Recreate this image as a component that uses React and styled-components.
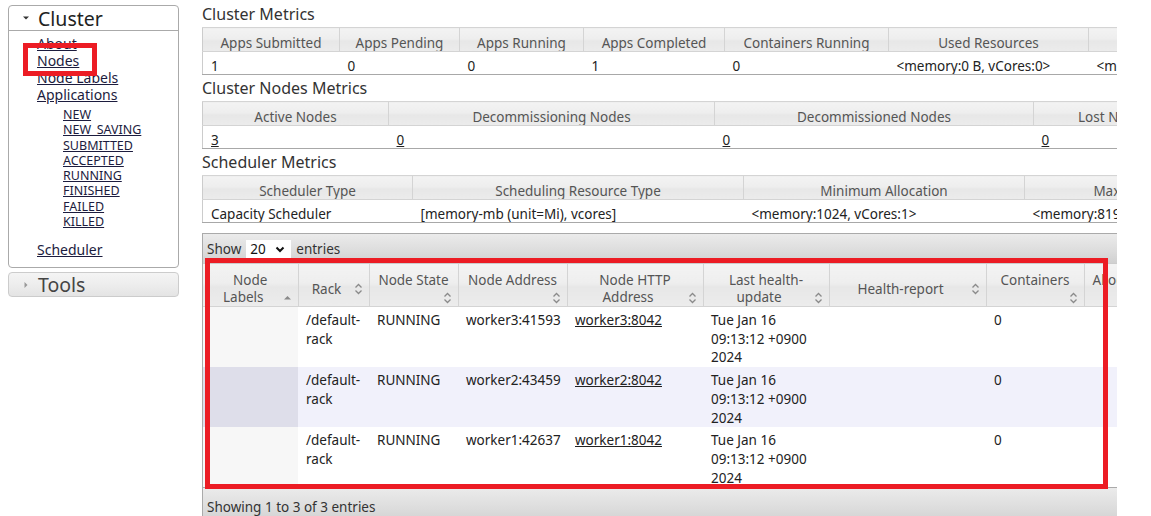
import React from 'react';
import styled, { createGlobalStyle } from 'styled-components';

const GlobalStyle = createGlobalStyle`
  html, body {
    margin: 0;
    padding: 0;
    background: #fff;
  }
  body {
    font-family: 'Noto Sans', 'Open Sans', sans-serif;
    color: #222;
  }
`;

const Page = styled.div`
  position: relative;
  width: 1151px;
  height: 516px;
  overflow: hidden;
  display: flex;
  gap: 23px;
  padding: 5px 0 0 8px;
  box-sizing: border-box;
`;

const Sidebar = styled.div`
  width: 171px;
  flex-shrink: 0;
  display: flex;
  flex-direction: column;
  gap: 4px;
`;

const MenuBox = styled.div`
  border: 1px solid #aaa;
  border-radius: 4px;
  background: #fff;
`;

const MenuHeader = styled.div`
  height: 24px;
  display: flex;
  align-items: center;
  gap: 8px;
  padding-left: 13px;
  border-bottom: 1px solid #aaa;
  font-size: 19.5px;
  color: #222;
`;

const ToolsHeader = styled(MenuHeader)`
  height: 23px;
  border: 1px solid #ccc;
  border-radius: 4px;
  background: linear-gradient(to bottom, #f4f4f4 0%, #ededed 50%, #e4e4e4 100%);
  color: #444;
`;

const NavList = styled.ul`
  list-style: none;
  margin: 0;
  padding: ${(p) => (p.$sub ? '4px 0 12px 26px' : '4px 0 9px 28px')};
`;

const NavItem = styled.li`
  line-height: ${(p) => (p.$sub ? '15.3px' : '17px')};
  font-size: ${(p) => (p.$sub ? '12.5px' : '14px')};
`;

const NavLink = styled.a`
  color: #1c1c3e;
  text-decoration: underline;
  cursor: pointer;
`;

const Main = styled.div`
  width: 915px;
  flex-shrink: 0;
  overflow: hidden;
  display: flex;
  flex-direction: column;
  margin-top: -5px;
  padding-top: 1px;
`;

const Heading = styled.h3`
  margin: 0;
  height: 28px;
  line-height: 26px;
  font-size: 16px;
  font-weight: normal;
  color: #333;
  white-space: nowrap;
`;

const MetricsTable = styled.table`
  border-collapse: collapse;
  table-layout: fixed;
  width: ${(p) => p.$width}px;
  font-size: 13.5px;
  line-height: 16px;
  border-left: 1px solid #ccc;
`;

const headerGradient = `linear-gradient(to bottom, #f3f3f3 0%, #eeeeee 45%, #e7e7e7 55%, #ececec 100%)`;

const MetricsHead = styled.th`
  height: 16px;
  padding: 7px 8px 0;
  font-weight: normal;
  color: #555;
  text-align: center;
  white-space: nowrap;
  overflow: hidden;
  background: ${headerGradient};
  border-top: 1px solid #d4d4d4;
  border-right: 1px solid #d4d4d4;
  border-bottom: 1px solid #d4d4d4;
`;

const MetricsCell = styled.td`
  height: 15px;
  padding: 6px 8px 0;
  white-space: nowrap;
  overflow: hidden;
  color: #222;
  border-bottom: 1px solid #a8a8a8;
`;

const Plain = styled.a`
  color: #222;
  text-decoration: underline;
`;

const DataWrap = styled.div`
  margin-top: 10px;
  width: ${(p) => p.$width}px;
  border-left: 1px solid #aaa;
`;

const Toolbar = styled.div`
  height: ${(p) => (p.$bottom ? '33px' : '28px')};
  display: flex;
  align-items: center;
  gap: 5px;
  padding: ${(p) => (p.$bottom ? '2px 0 0 4px' : '1px 0 0 4px')};
  font-size: 13.5px;
  color: #333;
  border-top: 1px solid #aaa;
  border-bottom: ${(p) => (p.$bottom ? 'none' : '1px solid #ccc')};
  background: linear-gradient(to bottom, #ebebeb 0%, #dcdcdc 60%, #d0d0d0 100%);
`;

const SelectBox = styled.div`
  position: relative;
  width: 45px;
  height: 19px;
  background: #fff;
`;

const Select = styled.select`
  appearance: none;
  width: 100%;
  height: 100%;
  border: none;
  background: transparent;
  padding: 0 0 0 4px;
  font-family: inherit;
  font-size: 13.5px;
  color: #111;
`;

const Chevron = styled.svg`
  position: absolute;
  right: 6px;
  top: 6px;
  pointer-events: none;
`;

const NodesTable = styled.table`
  border-collapse: collapse;
  table-layout: fixed;
  width: ${(p) => p.$width}px;
  font-size: 13.5px;
`;

const NodesHead = styled.th`
  height: 34px;
  padding: 8px 8px 0;
  font-weight: normal;
  color: #555;
  line-height: 17px;
  text-align: center;
  vertical-align: middle;
  background: ${headerGradient};
  border-right: 1px solid #d4d4d4;
  border-bottom: 1px solid #d4d4d4;
  white-space: nowrap;
  overflow: hidden;
`;

const HeadLine = styled.span`
  position: relative;
  display: block;
  min-height: 17px;
  padding-right: ${(p) => (p.$icon ? '14px' : '0')};
`;

const IconSlot = styled.span`
  position: absolute;
  right: -2px;
  top: 50%;
  transform: translateY(-50%);
  display: flex;
`;

const NodeRow = styled.tr`
  background: ${(p) => (p.$alt ? '#f1f1fb' : '#fff')};
`;

const NodeCell = styled.td`
  height: 56px;
  padding: 4px 8px 0;
  line-height: 18.7px;
  vertical-align: top;
  color: #222;
  background: ${(p) => (p.$sorted ? (p.$alt ? '#dedeea' : '#f7f7f7') : 'transparent')};
`;

const Annotation = styled.div`
  position: absolute;
  left: ${(p) => p.$x}px;
  top: ${(p) => p.$y}px;
  width: ${(p) => p.$w}px;
  height: ${(p) => p.$h}px;
  border: 5px solid #ec1c24;
  box-sizing: border-box;
  pointer-events: none;
`;

const SortBoth = () => (
  <svg width="9" height="13" viewBox="0 0 9 13">
    <path d="M1.5 5 L4.5 2 L7.5 5" fill="none" stroke="#8a8a8a" strokeWidth="1.3" />
    <path d="M1.5 8 L4.5 11 L7.5 8" fill="none" stroke="#8a8a8a" strokeWidth="1.3" />
  </svg>
);

const SortAsc = () => (
  <svg width="9" height="13" viewBox="0 0 9 13">
    <path d="M1 8 L4.5 4.5 L8 8 Z" fill="#8a8a8a" />
  </svg>
);

const Triangle = ({ dir }) => (
  <svg width="8" height="8" viewBox="0 0 8 8">
    {dir === 'down' ? (
      <path d="M1 2.5 L7 2.5 L4 5.5 Z" fill="#333" />
    ) : (
      <path d="M2.5 1 L5.5 4 L2.5 7 Z" fill="#999" />
    )}
  </svg>
);

const subLinks = ['NEW', 'NEW_SAVING', 'SUBMITTED', 'ACCEPTED', 'RUNNING', 'FINISHED', 'FAILED', 'KILLED'];

const clusterMetrics = [
  ['Apps Submitted', 137, '1'],
  ['Apps Pending', 120, '0'],
  ['Apps Running', 124, '0'],
  ['Apps Completed', 141, '1'],
  ['Containers Running', 164, '0'],
  ['Used Resources', 200, '<memory:0 B, vCores:0>'],
  ['Total Resources', 201, '<memory:24 GB, vCores:24>'],
];

const nodeMetrics = [
  ['Active Nodes', 186, '3'],
  ['Decommissioning Nodes', 326, '0'],
  ['Decommissioned Nodes', 319, '0'],
  ['Lost Nodes', 160, '0'],
  ['Unhealthy Nodes', 160, '0'],
];

const schedulerMetrics = [
  ['Scheduler Type', 210, 'Capacity Scheduler'],
  ['Scheduling Resource Type', 331, '[memory-mb (unit=Mi), vcores]'],
  ['Minimum Allocation', 281, '<memory:1024, vCores:1>'],
  ['Maximum Allocation', 268, '<memory:8192, vCores:4>'],
];

// lines of each header; icon: index of the line that carries the sort icon
const nodeColumns = [
  { lines: ['Node', 'Labels'], icon: 1, width: 95, asc: true },
  { lines: ['Rack'], icon: 0, width: 71 },
  { lines: ['Node State', ''], icon: 1, width: 89 },
  { lines: ['Node Address', ''], icon: 1, width: 109 },
  { lines: ['Node HTTP', 'Address'], icon: 1, width: 136 },
  { lines: ['Last health-', 'update'], icon: 1, width: 126 },
  { lines: ['Health-report'], icon: 0, width: 157 },
  { lines: ['Containers', ''], icon: 1, width: 98 },
  { lines: ['Allocation Tags', ''], icon: 1, width: 110 },
  { lines: ['Mem Used', ''], icon: 1, width: 100 },
];

const nodesWidth = nodeColumns.reduce((t, c) => t + c.width, 0);

const nodes = [
  { addr: 'worker3:41593', http: 'worker3:8042' },
  { addr: 'worker2:43459', http: 'worker2:8042' },
  { addr: 'worker1:42637', http: 'worker1:8042' },
];

const sum = (cols) => cols.reduce((t, c) => t + c[1], 0);

const Metrics = ({ title, cols, link }) => (
  <>
    <Heading>{title}</Heading>
    <MetricsTable $width={sum(cols)}>
      <colgroup>
        {cols.map(([name, w]) => (
          <col key={name} style={{ width: w }} />
        ))}
      </colgroup>
      <thead>
        <tr>
          {cols.map(([name]) => (
            <MetricsHead key={name}>{name}</MetricsHead>
          ))}
        </tr>
      </thead>
      <tbody>
        <tr>
          {cols.map(([name, , value]) => (
            <MetricsCell key={name}>{link ? <Plain>{value}</Plain> : value}</MetricsCell>
          ))}
        </tr>
      </tbody>
    </MetricsTable>
  </>
);

export default function App() {
  return (
    <>
      <GlobalStyle />
      <Page>
        <Sidebar>
          <MenuBox>
            <MenuHeader>
              <Triangle dir="down" />
              Cluster
            </MenuHeader>
            <NavList>
              {['About', 'Nodes', 'Node Labels', 'Applications'].map((l) => (
                <NavItem key={l}>
                  <NavLink>{l}</NavLink>
                </NavItem>
              ))}
              <li>
                <NavList $sub>
                  {subLinks.map((l) => (
                    <NavItem $sub key={l}>
                      <NavLink>{l}</NavLink>
                    </NavItem>
                  ))}
                </NavList>
              </li>
              <NavItem>
                <NavLink>Scheduler</NavLink>
              </NavItem>
            </NavList>
          </MenuBox>
          <ToolsHeader>
            <Triangle dir="right" />
            Tools
          </ToolsHeader>
        </Sidebar>

        <Main>
          <Metrics title="Cluster Metrics" cols={clusterMetrics} />
          <Metrics title="Cluster Nodes Metrics" cols={nodeMetrics} link />
          <Metrics title="Scheduler Metrics" cols={schedulerMetrics} />

          <DataWrap $width={nodesWidth}>
            <Toolbar>
              Show
              <SelectBox>
                <Select defaultValue="20">
                  <option value="20">20</option>
                  <option value="40">40</option>
                  <option value="60">60</option>
                </Select>
                <Chevron width="10" height="7" viewBox="0 0 10 7">
                  <path d="M1.5 1.5 L5 5 L8.5 1.5" fill="none" stroke="#111" strokeWidth="2" />
                </Chevron>
              </SelectBox>
              entries
            </Toolbar>
            <NodesTable $width={nodesWidth}>
              <colgroup>
                {nodeColumns.map((c, i) => (
                  <col key={i} style={{ width: c.width }} />
                ))}
              </colgroup>
              <thead>
                <tr>
                  {nodeColumns.map((c, i) => (
                    <NodesHead key={i}>
                      {c.lines.map((line, j) => (
                        <HeadLine key={j} $icon={j === c.icon}>
                          {line}
                          {j === c.icon && (
                            <IconSlot>{c.asc ? <SortAsc /> : <SortBoth />}</IconSlot>
                          )}
                        </HeadLine>
                      ))}
                    </NodesHead>
                  ))}
                </tr>
              </thead>
              <tbody>
                {nodes.map((n, i) => (
                  <NodeRow key={n.addr} $alt={i === 1}>
                    <NodeCell $sorted $alt={i === 1} />
                    <NodeCell>/default-rack</NodeCell>
                    <NodeCell>RUNNING</NodeCell>
                    <NodeCell>{n.addr}</NodeCell>
                    <NodeCell>
                      <Plain>{n.http}</Plain>
                    </NodeCell>
                    <NodeCell>
                      Tue Jan 16
                      <br />
                      09:13:12 +0900
                      <br />
                      2024
                    </NodeCell>
                    <NodeCell />
                    <NodeCell>0</NodeCell>
                    <NodeCell />
                    <NodeCell>0 B</NodeCell>
                  </NodeRow>
                ))}
              </tbody>
            </NodesTable>
            <Toolbar $bottom>Showing 1 to 3 of 3 entries</Toolbar>
          </DataWrap>
        </Main>

        <Annotation $x={23} $y={43} $w={74} $h={33} />
        <Annotation $x={205} $y={258} $w={903} $h={231} />
      </Page>
    </>
  );
}
